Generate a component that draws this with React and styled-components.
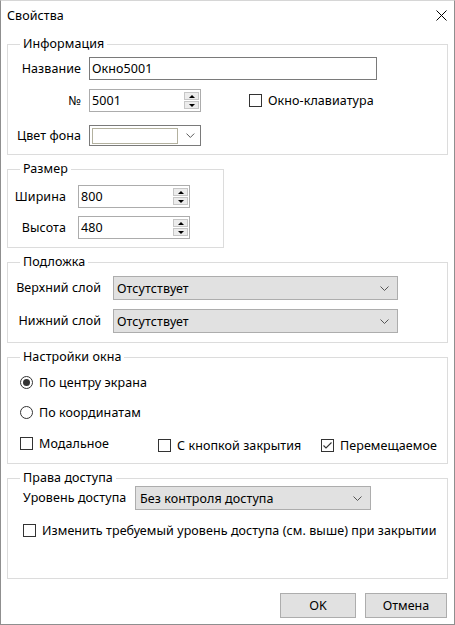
import React from "react";
import styled, { createGlobalStyle } from "styled-components";

const GlobalStyle = createGlobalStyle`
  html, body {
    margin: 0;
    padding: 0;
    background: #ffffff;
  }
  body {
    font-family: "Noto Sans", "Open Sans", "DejaVu Sans", sans-serif;
    font-size: 12.5px;
    letter-spacing: 0.08px;
    color: #000;
  }
  * { box-sizing: border-box; }
`;

const Window = styled.div`
  width: 455px;
  height: 625px;
  background: #fff;
  border: 1px solid #8f8f8f;
  border-top-color: #d6d6d6;
  display: flex;
  flex-direction: column;
`;

const TitleBar = styled.div`
  height: 30px;
  flex-shrink: 0;
  display: flex;
  align-items: center;
  justify-content: space-between;
  padding: 0 7px 0 6px;
`;

const Title = styled.span`
  line-height: 16px;
`;

const CloseBtn = styled.button`
  width: 12px;
  height: 12px;
  padding: 0;
  border: none;
  background: transparent;
  display: flex;
  align-items: center;
  justify-content: center;
  margin-top: -2px;
`;

const Body = styled.div`
  flex: 1;
  display: flex;
  flex-direction: column;
  gap: 6px;
  padding: 5px 6px 0 6px;
`;

const Group = styled.fieldset`
  margin: 0;
  padding: 0;
  min-width: 0;
  border: 1px solid #dcdcdc;
  width: ${(p) => p.$width || "auto"};
  align-self: ${(p) => (p.$full ? "stretch" : "flex-start")};
`;

const Legend = styled.legend`
  margin-left: 12px;
  padding: 0 3px;
  line-height: 16px;
`;

const GroupContent = styled.div`
  display: flex;
  flex-direction: column;
  padding: ${(p) => p.$pad};
`;

const Row = styled.div`
  display: flex;
  align-items: center;
  height: ${(p) => p.$h}px;
  margin-top: ${(p) => p.$mt || 0}px;
  gap: ${(p) => p.$gap || 0}px;
`;

const Label = styled.span`
  flex-shrink: 0;
  width: ${(p) => p.$w}px;
  text-align: ${(p) => p.$align || "right"};
  white-space: nowrap;
  line-height: 16px;
`;

const TextInput = styled.div`
  width: ${(p) => p.$w}px;
  height: 100%;
  border: 1px solid #7a7a7a;
  background: #fff;
  display: flex;
  align-items: center;
  padding-left: 2px;
`;

const SpinBox = styled.div`
  width: ${(p) => p.$w}px;
  height: 100%;
  border: 1px solid #acacac;
  background: #fff;
  display: flex;
  align-items: center;
  padding: 1px 1px 1px 2px;
`;

const SpinValue = styled.span`
  flex: 1;
`;

const SpinButtons = styled.div`
  width: 15px;
  height: 100%;
  display: flex;
  flex-direction: column;
  gap: 1px;
  padding: 1px 0;
`;

const SpinButton = styled.div`
  flex: 1;
  background: #ececec;
  border: 1px solid #c6c6c6;
  display: flex;
  align-items: center;
  justify-content: center;
`;

const Arrow = styled.span`
  width: 0;
  height: 0;
  border-left: 3px solid transparent;
  border-right: 3px solid transparent;
  ${(p) =>
    p.$up
      ? "border-bottom: 3px solid #000;"
      : "border-top: 3px solid #000;"}
`;

const ColorCombo = styled.div`
  width: ${(p) => p.$w}px;
  height: 100%;
  border: 1px solid #7a7a7a;
  background: #fff;
  display: flex;
  align-items: center;
  padding: 0 5px 0 2px;
  gap: 8px;
`;

const Swatch = styled.div`
  width: 89px;
  height: 16px;
  border: 1px solid #b3b19f;
  background: #fff;
`;

const Combo = styled.div`
  width: ${(p) => p.$w}px;
  height: 100%;
  background: #e1e1e1;
  border: 1px solid #adadad;
  display: flex;
  align-items: center;
  justify-content: space-between;
  padding: 0 8px 0 ${(p) => p.$pl || 3}px;
`;

const CheckItem = styled.label`
  display: flex;
  align-items: center;
  gap: 6px;
  height: 20px;
  margin-left: ${(p) => p.$ml || 0}px;
  margin-top: ${(p) => p.$mt || 0}px;
  white-space: nowrap;
`;

const Box = styled.span`
  width: 13px;
  height: 13px;
  flex-shrink: 0;
  border: 1px solid #333;
  background: #fff;
  border-radius: ${(p) => (p.$round ? "50%" : "0")};
  display: flex;
  align-items: center;
  justify-content: center;
`;

const Dot = styled.span`
  width: 7px;
  height: 7px;
  border-radius: 50%;
  background: #333;
`;

const OptionGrid = styled.div`
  display: grid;
  grid-template-columns: 138px 163px auto;
  align-items: start;
  margin-top: ${(p) => p.$mt || 0}px;
`;

const Footer = styled.div`
  display: flex;
  justify-content: flex-end;
  gap: 9px;
  padding: 10px 7px 6px 0;
`;

const Button = styled.button`
  width: ${(p) => p.$w}px;
  height: 25px;
  background: #e1e1e1;
  border: 1px solid #adadad;
  font: inherit;
  color: #000;
  padding: 0;
`;

const Chevron = () => (
  <svg width="9" height="5" viewBox="0 0 9 5">
    <polyline points="0.5,0.5 4.5,4.5 8.5,0.5" fill="none" stroke="#555" strokeWidth="1" />
  </svg>
);

const CloseIcon = () => (
  <svg width="11" height="11" viewBox="0 0 11 11">
    <path d="M0.5 0.5 L10.5 10.5 M10.5 0.5 L0.5 10.5" stroke="#000" strokeWidth="1" />
  </svg>
);

const Spin = ({ value, w }) => (
  <SpinBox $w={w}>
    <SpinValue>{value}</SpinValue>
    <SpinButtons>
      <SpinButton>
        <Arrow $up />
      </SpinButton>
      <SpinButton>
        <Arrow />
      </SpinButton>
    </SpinButtons>
  </SpinBox>
);

const Check = ({ checked, children, ml, mt }) => (
  <CheckItem $ml={ml} $mt={mt}>
    <Box>
      {checked && (
        <svg width="11" height="11" viewBox="0 0 11 11">
          <polyline points="1.5,5.5 4,8 9.5,2.5" fill="none" stroke="#333" strokeWidth="1.1" />
        </svg>
      )}
    </Box>
    <span>{children}</span>
  </CheckItem>
);

const Radio = ({ checked, children, mt }) => (
  <CheckItem $mt={mt}>
    <Box $round>{checked && <Dot />}</Box>
    <span>{children}</span>
  </CheckItem>
);

export default function App() {
  return (
    <>
      <GlobalStyle />
      <Window>
        <TitleBar>
          <Title>Свойства</Title>
          <CloseBtn aria-label="Закрыть">
            <CloseIcon />
          </CloseBtn>
        </TitleBar>

        <Body>
          <Group $full>
            <Legend>Информация</Legend>
            <GroupContent $pad="5px 0 8px 0">
              <Row $h={23} $gap={8}>
                <Label $w={73}>Название</Label>
                <TextInput $w={288}>Окно5001</TextInput>
              </Row>
              <Row $h={23} $gap={8} $mt={9}>
                <Label $w={73}>№</Label>
                <Spin value="5001" w={112} />
                <Check ml={40}>Окно-клавиатура</Check>
              </Row>
              <Row $h={21} $gap={8} $mt={13}>
                <Label $w={73}>Цвет фона</Label>
                <ColorCombo $w={112}>
                  <Swatch />
                  <Chevron />
                </ColorCombo>
              </Row>
            </GroupContent>
          </Group>

          <Group $width="217px">
            <Legend>Размер</Legend>
            <GroupContent $pad="8px 0 8px 0">
              <Row $h={23} $gap={12}>
                <Label $w={58}>Ширина</Label>
                <Spin value="800" w={112} />
              </Row>
              <Row $h={23} $gap={12} $mt={8}>
                <Label $w={58}>Высота</Label>
                <Spin value="480" w={112} />
              </Row>
            </GroupContent>
          </Group>

          <Group $full>
            <Legend>Подложка</Legend>
            <GroupContent $pad="6px 0 9px 0">
              <Row $h={24} $gap={12}>
                <Label $w={93}>Верхний слой</Label>
                <Combo $w={285}>
                  <span>Отсутствует</span>
                  <Chevron />
                </Combo>
              </Row>
              <Row $h={24} $gap={12} $mt={9}>
                <Label $w={93}>Нижний слой</Label>
                <Combo $w={285}>
                  <span>Отсутствует</span>
                  <Chevron />
                </Combo>
              </Row>
            </GroupContent>
          </Group>

          <Group $full>
            <Legend>Настройки окна</Legend>
            <GroupContent $pad="7px 0 8px 12px">
              <Radio checked>По центру экрана</Radio>
              <Radio mt={10}>По координатам</Radio>
              <OptionGrid $mt={11}>
                <Check>Модальное</Check>
                <Check mt={2}>С кнопкой закрытия</Check>
                <Check mt={2} checked>
                  Перемещаемое
                </Check>
              </OptionGrid>
            </GroupContent>
          </Group>

          <Group $full>
            <Legend>Права доступа</Legend>
            <GroupContent $pad="0 0 38px 15px">
              <Row $h={24} $gap={10}>
                <Label $w={102} $align="left">
                  Уровень доступа
                </Label>
                <Combo $w={236} $pl={4}>
                  <span>Без контроля доступа</span>
                  <Chevron />
                </Combo>
              </Row>
              <Check mt={10}>Изменить требуемый уровень доступа (см. выше) при закрытии</Check>
            </GroupContent>
          </Group>
        </Body>

        <Footer>
          <Button $w={76}>OK</Button>
          <Button $w={82}>Отмена</Button>
        </Footer>
      </Window>
    </>
  );
}
